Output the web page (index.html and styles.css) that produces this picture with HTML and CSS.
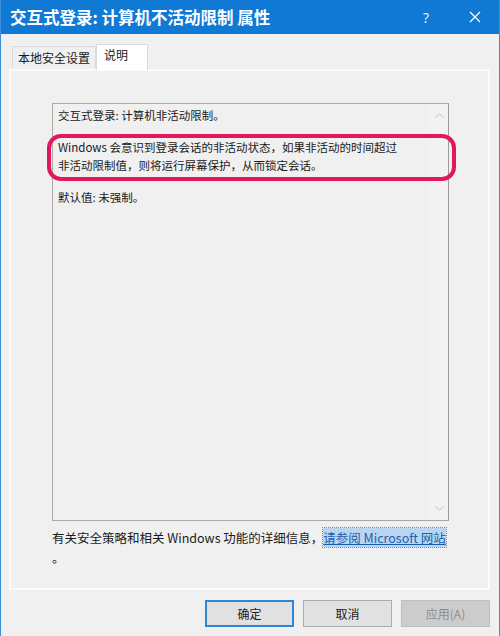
FILE: index.html
```html
<!DOCTYPE html>
<html lang="zh-CN">
<head>
    <meta charset="UTF-8">
    <meta name="viewport" content="width=device-width, initial-scale=1.0">
    <title>交互式登录: 计算机不活动限制 属性</title>
    <link rel="stylesheet" href="styles.css">
</head>
<body>
    <div class="window">
        <header class="titlebar">
            <h1>交互式登录: 计算机不活动限制 属性</h1>
            <span class="help">?</span>
            <svg class="close" width="12" height="12" viewBox="0 0 12 12">
                <path d="M1 1 L11 11 M11 1 L1 11" stroke="#fff" stroke-width="1.2" fill="none"/>
            </svg>
        </header>

        <div class="content">
            <ul class="tabs">
                <li class="tab">本地安全设置</li>
                <li class="tab active">说明</li>
            </ul>

            <div class="panel">
                <div class="textbox">
                    <p>交互式登录: 计算机非活动限制。</p>
                    <p>Windows 会意识到登录会话的非活动状态，如果非活动的时间超过<br>非活动限制值，则将运行屏幕保护，从而锁定会话。</p>
                    <p>默认值: 未强制。</p>
                    <div class="scrollbar">
                        <svg width="9" height="5" viewBox="0 0 9 5"><path d="M0.5 4.5 L4.5 0.8 L8.5 4.5" stroke="#c4c4c4" fill="none"/></svg>
                        <svg width="9" height="5" viewBox="0 0 9 5"><path d="M0.5 0.5 L4.5 4.2 L8.5 0.5" stroke="#c4c4c4" fill="none"/></svg>
                    </div>
                    <div class="mark"></div>
                </div>
                <p class="more">有关安全策略和相关 Windows 功能的详细信息，<a href="#" class="link">请参阅 Microsoft 网站</a><br>。</p>
            </div>

            <div class="buttons">
                <button class="btn default">确定</button>
                <button class="btn">取消</button>
                <button class="btn" disabled>应用(A)</button>
            </div>
        </div>
    </div>
</body>
</html>
```

FILE: styles.css
```css
* {
    margin: 0;
    padding: 0;
    box-sizing: border-box;
}

body {
    font-family: 'Noto Sans', 'Noto Sans CJK SC', sans-serif;
    font-size: 12px;
    color: #1a1a1a;
    background-color: #f0f0f0;
}

.window {
    width: 500px;
    height: 636px;
    border-left: 1px solid #3b8fd8;
    border-right: 1px solid #3b8fd8;
    overflow: hidden;
}

.titlebar {
    height: 34px;
    background-color: #0f79d3;
    color: #fff;
    display: flex;
    align-items: center;
    padding-left: 9px;
}

.titlebar h1 {
    font-family: 'Noto Sans CJK SC', sans-serif;
    font-size: 16.5px;
    font-weight: bold;
    flex: 1;
}

.help {
    font-size: 14px;
    width: 20px;
    text-align: center;
    margin-right: 33px;
    color: #dfeefb;
}

.close {
    margin-right: 18px;
}

.content {
    padding: 9px 9px 0 8px;
}

.tabs {
    list-style-type: none;
    display: flex;
    align-items: flex-end;
    padding-left: 3px;
    height: 26px;
    position: relative;
    z-index: 1;
}

.tab {
    height: 22px;
    line-height: 21px;
    padding: 0 5px;
    border: 1px solid #dadada;
    border-bottom: none;
    font-family: 'Noto Sans CJK SC', sans-serif;
    margin-bottom: 1px;
}

.tab.active {
    height: 26px;
    margin-bottom: -1px;
    background-color: #fff;
    padding: 0 8px 0 7px;
    width: 52px;
    line-height: 19px;
}

.panel {
    height: 521px;
    border: 2px solid #fbfbfb;
    padding: 32px 38px 0 41px;
}

.textbox {
    position: relative;
    width: 397px;
    height: 418px;
    border: 1px solid #a9a9a9;
    border-right-color: #9a9a9a;
    padding: 2px 20px 0 5px;
    font-size: 11.5px;
    line-height: 18px;
    font-family: 'Noto Sans CJK SC', sans-serif;
}

.textbox p {
    margin-bottom: 14px;
}

.scrollbar {
    position: absolute;
    top: 0;
    right: 0;
    width: 18px;
    height: 100%;
    background-color: #f2f2f2;
    display: flex;
    flex-direction: column;
    justify-content: space-between;
    align-items: center;
    padding: 9px 0 9px;
}

.mark {
    position: absolute;
    left: -6px;
    top: 30px;
    width: 409px;
    height: 47px;
    border: 4px solid #e2185b;
    border-radius: 14px;
}

.more {
    margin-top: 7px;
    font-size: 12.5px;
    line-height: 20px;
    font-family: 'Noto Sans CJK SC', sans-serif;
}

.link {
    color: #1a5fb4;
    background-color: #b9d5ef;
    outline: 1px dotted #6a8bb0;
    text-decoration: underline;
}

.buttons {
    display: flex;
    justify-content: flex-end;
    gap: 9px;
    padding-top: 10px;
    padding-right: 0;
}

.btn {
    width: 89px;
    height: 27px;
    font-family: 'Noto Sans CJK SC', sans-serif;
    font-size: 12px;
    color: #1a1a1a;
    background-color: #e1e1e1;
    border: 1px solid #adadad;
}

.btn.default {
    border: 2px solid #2f86d6;
}

.btn:disabled {
    background-color: #cccccc;
    border-color: #bfbfbf;
    color: #8d8d8d;
}
```
